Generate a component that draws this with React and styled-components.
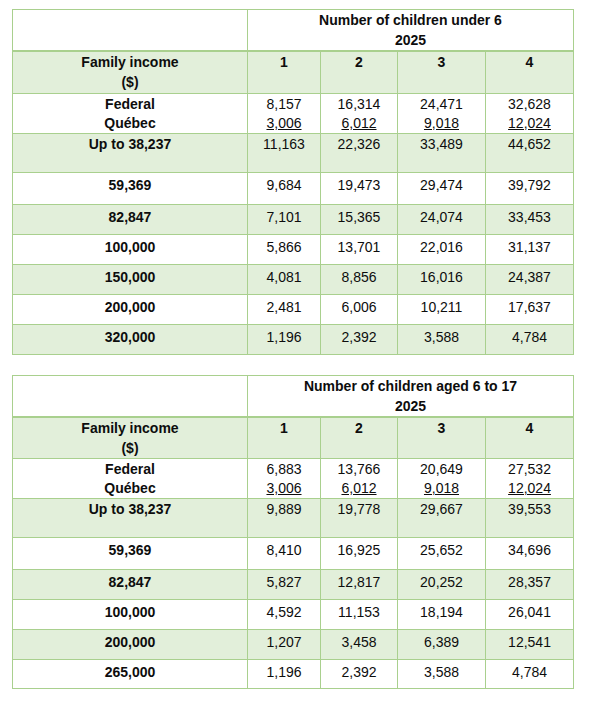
import React from 'react';
import styled, { createGlobalStyle } from 'styled-components';

const borderColor = '#a9d08e';
const fillColor = '#e2efda';

const GlobalStyle = createGlobalStyle`
  body {
    margin: 0;
    background: #fff;
    font-family: "Liberation Sans", Arial, sans-serif;
  }
`;

const Page = styled.div`
  padding: 9px 0 0 12px;
  display: flex;
  flex-direction: column;
  gap: 20px;
`;

const Table = styled.table`
  border-collapse: collapse;
  table-layout: fixed;
  width: 561px;
  font-size: 14px;
  line-height: 20px;
  color: #0d0d0d;
`;

const Row = styled.tr`
  height: ${p => p.$h}px;
  background: ${p => (p.$shade ? fillColor : '#fff')};
`;

const Cell = styled.td`
  border: 1px solid ${borderColor};
  border-bottom-width: ${p => (p.$thick ? 2 : 1)}px;
  text-align: center;
  vertical-align: top;
  padding: ${p => (p.$pt != null ? p.$pt : 2)}px 0 0 0;
  font-weight: ${p => (p.$bold ? 700 : 400)};
  line-height: ${p => p.$lh || 20}px;
`;

const Under = styled.span`
  text-decoration: underline;
`;

function IncomeTable({ title, firstRow, rows }) {
  return (
    <Table>
      <colgroup>
        <col style={{ width: 235 }} />
        <col style={{ width: 73 }} />
        <col style={{ width: 77 }} />
        <col style={{ width: 88 }} />
        <col style={{ width: 88 }} />
      </colgroup>
      <tbody>
        <Row $h={41}>
          <Cell $thick $pt={0} />
          <Cell colSpan={4} $bold $thick $pt={0}>
            {title}
            <br />
            2025
          </Cell>
        </Row>
        <Row $h={42} $shade>
          <Cell $bold $pt={0}>
            Family income
            <br />
            ($)
          </Cell>
          {['1', '2', '3', '4'].map(n => (
            <Cell key={n} $bold $pt={0}>{n}</Cell>
          ))}
        </Row>
        <Row $h={40}>
          <Cell $bold $pt={1} $lh={19}>
            Federal
            <br />
            Québec
          </Cell>
          {firstRow.federal.map((f, i) => (
            <Cell key={i} $pt={1} $lh={19}>
              {f}
              <br />
              <Under>{firstRow.quebec[i]}</Under>
            </Cell>
          ))}
        </Row>
        {rows.map((r, i) => (
          <Row key={r.label} $h={r.h} $shade={i % 2 === 0}>
            <Cell $bold $pt={i === 0 ? 0 : 2}>{r.label}</Cell>
            {r.values.map((v, j) => (
              <Cell key={j} $pt={i === 0 ? 0 : 2}>{v}</Cell>
            ))}
          </Row>
        ))}
      </tbody>
    </Table>
  );
}

const under6 = {
  title: 'Number of children under 6',
  firstRow: {
    federal: ['8,157', '16,314', '24,471', '32,628'],
    quebec: ['3,006', '6,012', '9,018', '12,024'],
  },
  rows: [
    { label: 'Up to 38,237', h: 39, values: ['11,163', '22,326', '33,489', '44,652'] },
    { label: '59,369', h: 32, values: ['9,684', '19,473', '29,474', '39,792'] },
    { label: '82,847', h: 30, values: ['7,101', '15,365', '24,074', '33,453'] },
    { label: '100,000', h: 30, values: ['5,866', '13,701', '22,016', '31,137'] },
    { label: '150,000', h: 30, values: ['4,081', '8,856', '16,016', '24,387'] },
    { label: '200,000', h: 30, values: ['2,481', '6,006', '10,211', '17,637'] },
    { label: '320,000', h: 30, values: ['1,196', '2,392', '3,588', '4,784'] },
  ],
};

const aged6to17 = {
  title: 'Number of children aged 6 to 17',
  firstRow: {
    federal: ['6,883', '13,766', '20,649', '27,532'],
    quebec: ['3,006', '6,012', '9,018', '12,024'],
  },
  rows: [
    { label: 'Up to 38,237', h: 39, values: ['9,889', '19,778', '29,667', '39,553'] },
    { label: '59,369', h: 32, values: ['8,410', '16,925', '25,652', '34,696'] },
    { label: '82,847', h: 30, values: ['5,827', '12,817', '20,252', '28,357'] },
    { label: '100,000', h: 30, values: ['4,592', '11,153', '18,194', '26,041'] },
    { label: '200,000', h: 30, values: ['1,207', '3,458', '6,389', '12,541'] },
    { label: '265,000', h: 29, values: ['1,196', '2,392', '3,588', '4,784'] },
  ],
};

export default function App() {
  return (
    <>
      <GlobalStyle />
      <Page>
        <IncomeTable {...under6} />
        <IncomeTable {...aged6to17} />
      </Page>
    </>
  );
}
